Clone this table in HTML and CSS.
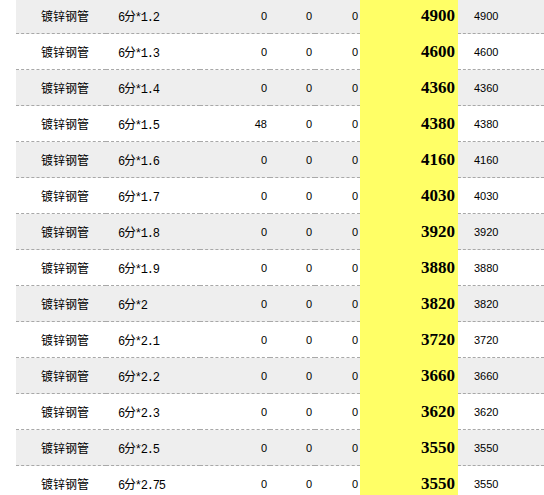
FILE: index.html
```html
<!DOCTYPE html>
<html lang="zh">
<head>
<meta charset="utf-8">
<title>镀锌钢管价格</title>
<link rel="stylesheet" href="styles.css">
</head>
<body>
<div class="wrap">
<table class="price">
<tbody>
<tr class="alt"><td class="name">镀锌钢管</td><td class="spec">6分*1.2</td><td class="n3">0</td><td class="n4">0</td><td class="n5">0</td><td class="big">4900</td><td class="small">4900</td></tr>
<tr><td class="name">镀锌钢管</td><td class="spec">6分*1.3</td><td class="n3">0</td><td class="n4">0</td><td class="n5">0</td><td class="big">4600</td><td class="small">4600</td></tr>
<tr class="alt"><td class="name">镀锌钢管</td><td class="spec">6分*1.4</td><td class="n3">0</td><td class="n4">0</td><td class="n5">0</td><td class="big">4360</td><td class="small">4360</td></tr>
<tr><td class="name">镀锌钢管</td><td class="spec">6分*1.5</td><td class="n3">48</td><td class="n4">0</td><td class="n5">0</td><td class="big">4380</td><td class="small">4380</td></tr>
<tr class="alt"><td class="name">镀锌钢管</td><td class="spec">6分*1.6</td><td class="n3">0</td><td class="n4">0</td><td class="n5">0</td><td class="big">4160</td><td class="small">4160</td></tr>
<tr><td class="name">镀锌钢管</td><td class="spec">6分*1.7</td><td class="n3">0</td><td class="n4">0</td><td class="n5">0</td><td class="big">4030</td><td class="small">4030</td></tr>
<tr class="alt"><td class="name">镀锌钢管</td><td class="spec">6分*1.8</td><td class="n3">0</td><td class="n4">0</td><td class="n5">0</td><td class="big">3920</td><td class="small">3920</td></tr>
<tr><td class="name">镀锌钢管</td><td class="spec">6分*1.9</td><td class="n3">0</td><td class="n4">0</td><td class="n5">0</td><td class="big">3880</td><td class="small">3880</td></tr>
<tr class="alt"><td class="name">镀锌钢管</td><td class="spec">6分*2</td><td class="n3">0</td><td class="n4">0</td><td class="n5">0</td><td class="big">3820</td><td class="small">3820</td></tr>
<tr><td class="name">镀锌钢管</td><td class="spec">6分*2.1</td><td class="n3">0</td><td class="n4">0</td><td class="n5">0</td><td class="big">3720</td><td class="small">3720</td></tr>
<tr class="alt"><td class="name">镀锌钢管</td><td class="spec">6分*2.2</td><td class="n3">0</td><td class="n4">0</td><td class="n5">0</td><td class="big">3660</td><td class="small">3660</td></tr>
<tr><td class="name">镀锌钢管</td><td class="spec">6分*2.3</td><td class="n3">0</td><td class="n4">0</td><td class="n5">0</td><td class="big">3620</td><td class="small">3620</td></tr>
<tr class="alt"><td class="name">镀锌钢管</td><td class="spec">6分*2.5</td><td class="n3">0</td><td class="n4">0</td><td class="n5">0</td><td class="big">3550</td><td class="small">3550</td></tr>
<tr><td class="name">镀锌钢管</td><td class="spec">6分*2.75</td><td class="n3">0</td><td class="n4">0</td><td class="n5">0</td><td class="big">3550</td><td class="small">3550</td></tr>
</tbody>
</table>
</div>
</body>
</html>
```
FILE: styles.css
```css
html, body {
  margin: 0;
  padding: 0;
  background: #ffffff;
  overflow: hidden;
}

.wrap {
  margin-top: -2px;
  padding-left: 16px;
}

.price {
  border-collapse: collapse;
  table-layout: fixed;
  width: 528px;
  font-family: "Liberation Sans", "Noto Sans CJK SC", sans-serif;
  font-size: 11px;
  color: #000;
}

.price td {
  height: 35px;
  padding: 0;
  border-bottom: 1px dashed #a8a8a8;
  vertical-align: middle;
  white-space: nowrap;
  line-height: 16px;
}

.price tr.alt td {
  background: #eeeeee;
}

.price td.name {
  width: 65px;
  padding-left: 25px;
  font-family: "Noto Sans CJK SC", sans-serif;
  font-size: 12px;
}

.price td.spec {
  width: 82px;
  height: 31px;
  padding-left: 12px;
  padding-top: 4px;
  font-family: "Liberation Mono", "Noto Sans CJK SC", monospace;
  font-size: 12px;
  letter-spacing: -1.2px;
}

.price td.n3 {
  width: 67px;
  padding-right: 3px;
  text-align: right;
}

.price td.n4 {
  width: 42px;
  padding-right: 3px;
  text-align: right;
}

.price td.n5 {
  width: 43px;
  padding-right: 2px;
  text-align: right;
}

.price td.big,
.price tr.alt td.big {
  width: 95px;
  padding-right: 3px;
  text-align: right;
  background: #ffff66;
  border-bottom-color: #ffff66;
  border-bottom-style: solid;
  font-family: "Liberation Serif", serif;
  font-weight: bold;
  font-size: 17px;
}

.price td.small {
  padding-left: 16px;
  font-size: 11px;
}
```
